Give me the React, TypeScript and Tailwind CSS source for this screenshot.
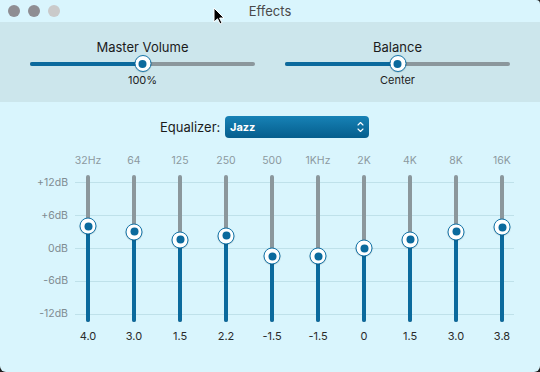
import React from "react";

const bands: { f: string; v: number }[] = [
  { f: "32Hz", v: 4.0 },
  { f: "64", v: 3.0 },
  { f: "125", v: 1.5 },
  { f: "250", v: 2.2 },
  { f: "500", v: -1.5 },
  { f: "1KHz", v: -1.5 },
  { f: "2K", v: 0 },
  { f: "4K", v: 1.5 },
  { f: "8K", v: 3.0 },
  { f: "16K", v: 3.8 },
];

function fmt(v: number) {
  if (v === 0) return "0";
  return v.toFixed(1);
}

function Thumb() {
  return (
    <div className="w-[17px] h-[17px] rounded-full bg-white border-[1.5px] border-[#1677ab] flex items-center justify-center shadow-[0_0.5px_1px_rgba(0,0,0,0.25)]">
      <div className="w-[8px] h-[8px] rounded-full bg-[#0b6a9d]" />
    </div>
  );
}

function HSlider({ label, value, pos }: { label: string; value: string; pos: number }) {
  return (
    <div className="w-[225px] flex flex-col items-center">
      <div className="text-[13px] leading-[16px] text-[#1b1b1b]">{label}</div>
      <div className="relative w-full h-[17px] flex items-center">
        <div className="w-full h-[4px] rounded-full bg-[#8b979c] flex">
          <div className="h-full rounded-full bg-[#0b6a9d]" style={{ width: `${pos * 100}%` }} />
        </div>
        <div className="absolute top-0 -translate-x-1/2" style={{ left: `${pos * 100}%` }}>
          <Thumb />
        </div>
      </div>
      <div className="text-[11px] leading-[14px] text-[#222] mt-[1px]">{value}</div>
    </div>
  );
}

function VSlider({ v }: { v: number }) {
  const center = 73 - v * 5.5;
  return (
    <div className="w-[40px] h-full flex justify-center">
      <div className="relative w-[4px] h-full rounded-full bg-[#8b979c]">
        <div
          className="absolute left-0 right-0 bottom-0 rounded-full bg-[#0b6a9d]"
          style={{ top: `${center}px` }}
        />
        <div className="absolute left-1/2 -translate-x-1/2 -translate-y-1/2" style={{ top: `${center}px` }}>
          <Thumb />
        </div>
      </div>
    </div>
  );
}

export default function App() {
  const dbLabels = ["+12dB", "+6dB", "0dB", "-6dB", "-12dB"];
  return (
    <div className="w-[540px] h-[372px] bg-[#1e1e1e] font-['Inter',sans-serif]">
      <div className="relative w-full h-full bg-[#d9f5fd] rounded-tr-[4px] rounded-b-[6px] overflow-hidden flex flex-col">
        {/* title bar */}
        <div className="h-[22px] flex items-center px-[8px] relative shrink-0">
          <div className="flex gap-[8px]">
            <div className="w-[12px] h-[12px] rounded-full bg-[#8e8d92]" />
            <div className="w-[12px] h-[12px] rounded-full bg-[#8e8d92]" />
            <div className="w-[12px] h-[12px] rounded-full bg-[#cacaca]" />
          </div>
          <div className="flex-1 text-center text-[13px] text-[#4a4a4a] -ml-[52px] leading-[22px]">Effects</div>
          <svg className="absolute left-[213px] top-[7px]" width="12" height="18" viewBox="0 0 12 18">
            <path d="M1 1 L1 15 L4.5 11.8 L7 17 L9 16 L6.6 11 L11 11 Z" fill="#000" stroke="#fff" strokeWidth="1" strokeLinejoin="round" />
          </svg>
        </div>
        {/* top panel */}
        <div className="h-[80px] bg-[#cce6ec] flex justify-between px-[30px] pt-[17px] shrink-0">
          <HSlider label="Master Volume" value="100%" pos={0.502} />
          <HSlider label="Balance" value="Center" pos={0.5} />
        </div>
        {/* equalizer select */}
        <div className="flex items-center pt-[14px] pl-[160px]">
          <div className="text-[13px] text-[#1b1b1b] w-[58px] leading-[22px]">Equalizer:</div>
          <div className="ml-[7px] w-[144px] h-[22px] rounded-[4px] bg-gradient-to-b from-[#1782b6] to-[#055e8d] flex items-center justify-between pl-[5px] pr-[5px]">
            <span className="text-[11px] font-bold text-white">Jazz</span>
            <svg width="7" height="12" viewBox="0 0 7 12" fill="none" stroke="#fff" strokeWidth="1.1" strokeLinecap="round" strokeLinejoin="round">
              <path d="M1 4 L3.5 1.5 L6 4" />
              <path d="M1 8 L3.5 10.5 L6 8" />
            </svg>
          </div>
        </div>
        {/* EQ */}
        <div className="flex flex-col pl-[68px] mt-[16px]">
          <div className="flex gap-[6px] h-[14px]">
            {bands.map((b) => (
              <div key={b.f} className="w-[40px] text-center text-[10.5px] leading-[14px] text-[#8c999f]">{b.f}</div>
            ))}
          </div>
          <div className="flex h-[147px] mt-[7px] -ml-[68px]">
            <div className="w-[68px] flex flex-col justify-between py-[1px]">
              {dbLabels.map((l) => (
                <div key={l} className="h-[14px] text-right text-[10.5px] leading-[14px] text-[#7f8c92]">{l}</div>
              ))}
            </div>
            <div className="grid">
              <div className="[grid-area:1/1] flex flex-col justify-between py-[7px] ml-[7px] mr-[8px]">
                {dbLabels.map((l) => (
                  <div key={l} className="h-px bg-[#bfe1ea]" />
                ))}
              </div>
              <div className="[grid-area:1/1] flex gap-[6px] h-[147px]">
                {bands.map((b) => (
                  <VSlider key={b.f} v={b.v} />
                ))}
              </div>
            </div>
          </div>
          <div className="flex gap-[6px] h-[14px] mt-[7px]">
            {bands.map((b) => (
              <div key={b.f} className="w-[40px] text-center text-[11px] leading-[14px] text-[#2a2a2a]">{fmt(b.v)}</div>
            ))}
          </div>
        </div>
      </div>
    </div>
  );
}
